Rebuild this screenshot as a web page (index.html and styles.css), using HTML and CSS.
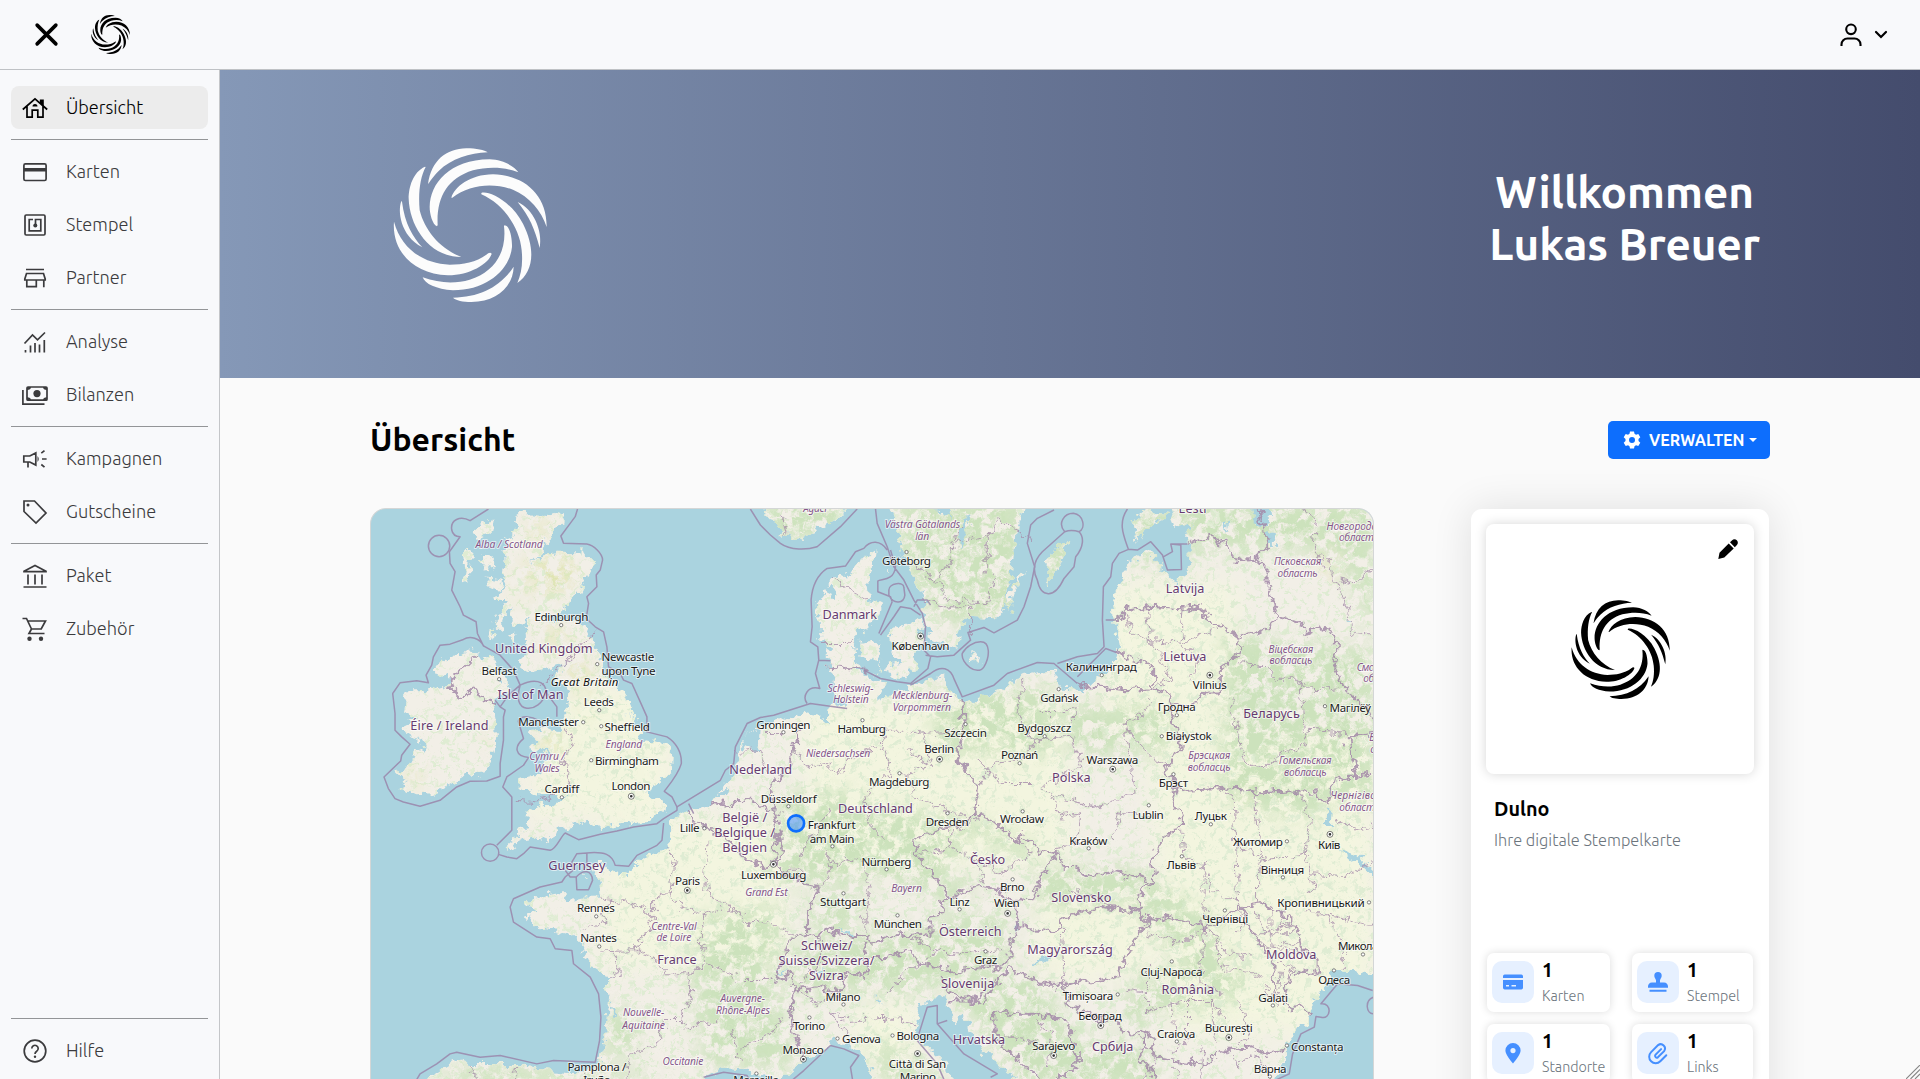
FILE: index.html
```html
<!DOCTYPE html>
<html lang="de">
<head>
<meta charset="utf-8">
<title>Dulno – Übersicht</title>
<link rel="stylesheet" href="styles.css">
</head>
<body>
<svg class="defs" aria-hidden="true">
  <symbol id="logo" viewBox="70 83 462 462">
    <path d="M175 192C185 120 230 85 290 84C320 84 345 90 354 96C300 98 245 115 207 152C188 171 180 185 175 192Z"/>
    <path d="M202 318C188 312 180 280 180 260C180 190 240 118 360 117C400 118 435 138 446 156C400 138 350 140 310 150C230 175 200 235 204 314Z"/>
    <path d="M245 232C255 200 300 163 370 162C460 164 532 220 531 320C515 270 480 230 430 208C370 186 300 192 248 232Z"/>
    <path d="M166 139C130 155 117 200 117 235C120 320 180 410 275 410C210 385 165 330 150 270C145 215 152 170 168 140Z"/>
    <path d="M95 242C84 270 90 345 158 381C130 350 105 310 97 244Z"/>
    <path d="M73 304C66 390 130 462 235 465C300 465 358 430 366 400C362 394 356 398 350 403C320 425 280 433 240 433C160 430 95 385 73 304Z"/>
    <path d="M335 218C350 210 420 235 460 310C500 390 490 455 443 488C455 460 460 430 456 390C450 320 400 250 335 222Z"/>
    <path d="M444 245C490 265 520 330 510 383C495 325 480 290 444 245Z"/>
    <path d="M404 315C422 315 428 360 427 380C420 450 350 510 250 510C200 507 165 490 159 471C210 490 260 490 300 478C375 455 412 395 403 318Z"/>
    <path d="M432 439C430 500 380 545 305 545C280 545 258 540 250 532C330 530 390 502 432 439Z"/>
  </symbol>
</svg>

<header class="topbar">
  <div class="topbar-left">
    <svg class="close" viewBox="0 0 24 24"><path d="M3 3L21 21M21 3L3 21"/></svg>
    <svg class="brand"><use href="#logo"/></svg>
  </div>
  <div class="user">
    <svg class="user-icon" viewBox="0 0 22 24"><circle cx="11" cy="6.3" r="4.8"/><path d="M1.500 23v-1.500a6 6 0 0 1 6-6h7a6 6 0 0 1 6 6V23"/></svg>
    <svg class="chevron" viewBox="0 0 14 10"><path d="M2 2l5 5 5-5"/></svg>
  </div>
</header>

<div class="shell">
  <nav class="sidebar">
    <a class="item active"><svg viewBox="0 0 26 26"><path d="M.8 14.500L13 3.800l12.200 10.700M5 11.500V22.200h5.200v-7h5.600v7H21V11.500"/><path class="solid" d="M17.800 4.500h4v7l-4-3.500zM10.500 11.500a2.500 2.500 0 0 1 5 0z"/></svg><span>Übersicht</span></a>
    <hr>
    <a class="item"><svg viewBox="0 0 26 26"><rect x="1.900" y="4.900" width="22.200" height="16.600" rx="1.500"/><path class="solid" d="M2 9h22v3.500H2z"/></svg><span>Karten</span></a>
    <a class="item"><svg viewBox="0 0 26 26"><rect x="3" y="3" width="20" height="20" rx="1.200"/><path d="M11 7.500H7.200v11.300h11.600V7.500H13.500v5"/><circle class="solid" cx="13.300" cy="13.500" r="2"/></svg><span>Stempel</span></a>
    <a class="item"><svg viewBox="0 0 26 26"><path d="M4 4.500h18M4.500 8.500h17l1.700 5.500v1H2.800v-1zM4.800 15v6.600h9.500V15M21.800 15v7.300"/></svg><span>Partner</span></a>
    <hr>
    <a class="item"><svg viewBox="0 0 26 26"><path d="M2.500 14.500l8-8.500 5 4.800L23 3.500M3.500 21v2.500M8.500 16.500v7M13 14v9.500M17.500 15.500v8M22.300 11v12.500"/></svg><span>Analyse</span></a>
    <a class="item"><svg viewBox="0 0 26 26"><rect x="5" y="5" width="20" height="13.200" rx="1"/><path d="M.9 8v14.200h21.600"/><circle class="solid" cx="15" cy="11.600" r="3.600"/><path class="solid" d="M5 5h4q0 3-4 3zM25 5h-4q0 3 4 3zM5 18.200h4q0-3-4-3zM25 18.200h-4q0-3 4-3z"/></svg><span>Bilanzen</span></a>
    <hr>
    <a class="item"><svg viewBox="0 0 26 26"><path d="M1.800 10h6l6-3v12l-6-3h-6zM6 16v5.500M19.300 7.200l3.200-2.500M20 13h4.600M19.300 18.500l3.200 2.600"/><path class="solid" d="M15.500 10q2.500 3 0 6z"/></svg><span>Kampagnen</span></a>
    <a class="item"><svg viewBox="0 0 26 26"><path d="M2 2h10.500l11.500 12-10 10L2 12.500z"/><circle class="solid" cx="6" cy="6" r="1.500"/></svg><span>Gutscheine</span></a>
    <hr>
    <a class="item"><svg viewBox="0 0 26 26"><path d="M2 8.200L13 2.500l11 5.700v.5H2zM6 11.500v10M13 11.500v10M20 11.500v10M1.500 24h23"/></svg><span>Paket</span></a>
    <a class="item"><svg viewBox="0 0 26 26"><path d="M.5 2.500h4l5 10.500h9.700l4.300-8H5.500M9.500 13l-2.500 4.500h15.500"/><circle class="solid" cx="7.500" cy="22.800" r="2.200"/><circle class="solid" cx="19" cy="22.800" r="2.200"/></svg><span>Zubehör</span></a>
    <div class="spacer"></div>
    <hr>
    <a class="item"><svg viewBox="0 0 26 26"><circle cx="13" cy="13" r="10.800"/><path d="M9.800 10.500a3.200 3.200 0 1 1 4.900 2.700c-1.200.8-1.700 1.400-1.700 2.800"/><circle class="solid" cx="13" cy="18.800" r="1.200"/></svg><span>Hilfe</span></a>
  </nav>

  <main class="main">
    <section class="hero">
      <svg class="hero-logo"><use href="#logo"/></svg>
      <h1>Willkommen<br>Lukas Breuer</h1>
    </section>

    <section class="heading">
      <h2>Übersicht</h2>
      <button class="manage" type="button">
        <svg viewBox="0 0 18 18"><path fill-rule="evenodd" d="M7 .5h4l.5 2.300 1.500.9 2.300-.8 2 3.400L15.500 8v2l1.800 1.700-2 3.400-2.300-.8-1.500.9-.5 2.300H7l-.5-2.300-1.500-.9-2.300.8-2-3.400L2.500 10V8L.7 6.300l2-3.400 2.300.8 1.500-.9zM9 6a3 3 0 1 0 0 6 3 3 0 0 0 0-6z"/></svg>
        <span>VERWALTEN</span><i class="caret"></i>
      </button>
    </section>

    <section class="content">
      <div class="map">
        <svg viewBox="3 27 3003 1713" preserveAspectRatio="xMinYMin slice">
          <defs>
            <path id="land" d="M450 40L520 48 583 33 583 65 545 95 530 120 515 155 485 185 530 160 570 155 640 158 668 178 664 205 645 240 630 270 612 300 590 325 560 340 520 350 545 365 600 350 645 380 662 410 680 450 695 490 700 530 740 550 770 590 790 640 795 650 760 636 800 655 790 680 815 700 810 720 850 725 890 735 910 760 908 800 890 830 860 855 830 875 850 893 888 903 886 930 850 950 800 965 720 975 700 985 640 965 610 975 560 985 545 1025 520 1020 490 1012 445 1020 435 1050 405 1040 430 1020 470 970 480 930 510 915 560 915 590 890 605 878 570 893 540 885 490 878 455 860 440 842 490 830 520 810 535 780 540 755 520 745 490 765 478 755 505 725 470 690 530 685 570 690 590 640 585 600 600 570 590 560 560 550 560 520 580 490 520 510 490 520 450 500 450 480 478 460 465 430 462 390 480 350 440 375 420 370 430 320 400 350 385 345 410 300 370 300 410 250 400 230 405 200 400 150 420 110 440 80 435 50Z
            M315 90L370 55 360 100 320 120 308 105ZM285 150L305 150 295 245 278 250 288 210ZM330 180L350 155 378 200 350 205ZM340 235L400 242 390 268 360 255ZM375 350L405 345 390 390 378 380ZM420 405L440 400 436 430ZM365 390L375 385 372 415 360 410Z
            M195 500L240 470 290 450 325 455 335 472 370 470 385 500 410 540 410 580 365 600 375 650 380 700 370 760 355 800 350 815 290 825 250 850 200 880 150 885 110 875 85 860 110 845 80 815 115 800 140 755 175 740 120 700 100 690 110 670 140 660 105 640 110 600 105 570 180 570 230 555 250 530 195 520Z
            M165 1740L230 1695 265 1675 300 1690 400 1690 440 1690 550 1710 640 1717 690 1690 700 1650 710 1500 715 1490 710 1440 725 1430 690 1420 665 1400 650 1370 640 1340 620 1310 560 1295 500 1280 470 1245 500 1240 470 1210 500 1185 580 1175 600 1200 640 1195 690 1195 685 1150 665 1085 700 1085 710 1115 780 1125 800 1105 800 1085 890 1045 900 1020 900 960 960 935 1025 905 1050 870 1090 820 1110 770 1115 700 1165 680 1250 655 1300 640 1350 650 1372 670 1375 620 1430 620 1400 590 1385 560 1390 520 1375 500 1375 450 1350 420 1345 310 1365 260 1390 235 1440 225 1470 180 1515 150 1510 200 1490 240 1495 300 1535 310 1530 340 1500 370 1480 390 1450 425 1455 470 1450 510 1500 530 1550 545 1520 600 1590 570 1640 555 1690 530 1725 530 1735 570 1780 610 1840 590 1910 560 1960 520 2030 510 2050 515 2065 565 2130 570 2165 540 2210 510 2245 460 2230 360 2225 310 2250 250 2265 190 2330 150 2375 200 2410 250 2450 220 2455 130 2440 110 2465 70 2410 80 2395 10 3030 10 3030 1425 2910 1405 2880 1415 2875 1440 2840 1480 2810 1530 2815 1570 2780 1575 2755 1610 2745 1640 2745 1680 2700 1760 1980 1760 1890 1700 1810 1620 1790 1560 1770 1540 1755 1570 1735 1540 1730 1490 1690 1490 1630 1520 1645 1560 1635 1600 1680 1650 1730 1690 1750 1760 1510 1760 1495 1690 1470 1655 1420 1630 1390 1620 1360 1650 1300 1680 1250 1720 1230 1740 1180 1725 1090 1705 1050 1700 1000 1730 985 1760 165 1760Z
            M1555 10L1580 80 1600 170 1630 240 1670 310 1650 330 1665 370 1680 420 1760 440 1770 380 1800 350 1880 355 1910 300 1920 220 1935 130 1950 50 1965 10ZM1170 10L1200 60 1240 100 1300 120 1340 90 1410 50 1435 10Z
            M1555 400L1600 375 1640 355 1660 370 1650 400 1655 430 1630 460 1640 490 1610 535 1560 525 1545 500 1590 490 1560 450ZM1470 425L1510 415 1530 440 1520 480 1490 480 1470 460ZM1960 205L1915 335 1908 325 1915 290 1940 230ZM1800 455L1825 470 1820 490 1797 478ZM2035 160L2100 120 2075 180 2045 230 2032 255 2030 200ZM2290 60L2330 30 2390 35 2370 65 2320 85 2300 125 2285 90ZM1435 480L1475 500 1460 508ZM1535 475L1520 520 1530 515ZM638 1130L652 1132 645 1138ZM1545 208L1558 206 1550 216Z"/>
            <clipPath id="landClip"><use href="#land"/></clipPath>
            <filter id="rough" filterUnits="userSpaceOnUse" x="-20" y="0" width="3060" height="1760" color-interpolation-filters="sRGB">
              <feTurbulence type="fractalNoise" baseFrequency=".04" numOctaves="3" seed="4"/>
              <feDisplacementMap in="SourceGraphic" scale="42" xChannelSelector="R" yChannelSelector="G"/>
            </filter>
            <filter id="soft" filterUnits="userSpaceOnUse" x="-20" y="0" width="3060" height="1760" color-interpolation-filters="sRGB">
              <feGaussianBlur stdDeviation="40"/>
            </filter>
            <filter id="woods" filterUnits="userSpaceOnUse" x="-20" y="0" width="3060" height="1760" color-interpolation-filters="sRGB">
              <feGaussianBlur in="SourceGraphic" stdDeviation="28" result="b"/>
              <feTurbulence type="fractalNoise" baseFrequency=".03" numOctaves="6" seed="9"/>
              <feColorMatrix values="0 0 0 0 0  0 0 0 0 0  0 0 0 0 0  5 0 0 0 -1.900" result="n"/>
              <feComposite in="b" in2="n" operator="in"/>
            </filter>
            <filter id="speck" filterUnits="userSpaceOnUse" x="-20" y="0" width="3060" height="1760" color-interpolation-filters="sRGB">
              <feTurbulence type="fractalNoise" baseFrequency=".05" numOctaves="5" seed="21"/>
              <feColorMatrix values="0 0 0 0 0  0 0 0 0 0  0 0 0 0 0  0 7 0 0 -3.800" result="n"/>
              <feComposite in="SourceGraphic" in2="n" operator="in"/>
            </filter>
          </defs>

          <g filter="url(#rough)">
            <use href="#land" class="land"/>
            <g clip-path="url(#landClip)">
              <path class="plain" d="M700 960H1250V1400H700ZM1300 600H2100V1100H1300ZM2200 250H2600V700H2200ZM2330 700H3010V1600H2400ZM2000 1170H2350V1430H2000ZM1450 1500H1640V1700H1450ZM600 560H900V950H450Z" filter="url(#soft)"/>
              <path class="speck" d="M0 0H3020V1760H0Z" filter="url(#speck)"/>
              <g class="wood" filter="url(#woods)">
                <path d="M1560 0H1960V370H1700L1600 200ZM1170 0H1430V120H1200Z"/>
                <path d="M2240 150H2900L3010 450V0H2400L2450 230ZM2560 400L3010 450V900H2550Z"/>
                <path d="M1680 560H2050V760H1700ZM2060 620H2400V760H2100Z"/>
                <path d="M1230 880H1480V1150H1200ZM1450 900L1900 980 1780 1020 1700 1180 1480 1120Z"/>
                <path d="M1350 1180L1500 1200 1400 1320 1300 1260ZM1680 1130L1830 1150 1720 1250Z"/>
                <path d="M1000 1240L1250 1220 1200 1400 1280 1700 1000 1700 960 1400Z"/>
                <path d="M1240 1350L1900 1230 1920 1400 1600 1480 1260 1480ZM1720 1450L2000 1420 2200 1760H1960Z"/>
                <path d="M1990 1100L2320 1100 2350 1200 2000 1230ZM2320 1120L2520 1250 2580 1420 2500 1440 2300 1240Z"/>
                <path d="M2300 1420L2620 1380 2600 1500 2320 1540ZM2240 1470L2340 1500 2310 1610 2250 1570ZM2100 1600L2330 1640 2400 1760H2050Z"/>
                <path d="M715 1500L810 1560 800 1650 700 1680ZM300 1690L850 1720V1760H165ZM2600 820L2880 830 2850 960 2640 930ZM2000 100H2110V260H2000ZM2280 20H2400V130H2280Z"/>
                <path d="M1500 1600L1640 1680 1740 1760H1550ZM1850 980L2000 1030 1980 1080 1850 1040Z"/>
              </g>
              <g class="moor" filter="url(#woods)">
                <path d="M480 70H530V110H480ZM500 190L570 170 620 230 540 280 500 250ZM440 200L490 190 470 240ZM520 390L600 400 590 440 510 420ZM600 480L660 500 650 570 610 560ZM650 600L670 660 640 650ZM520 700L570 690 570 760 520 750ZM340 690L370 700 360 740ZM400 280L490 280 470 300ZM2860 160L2890 180 2880 240 2850 230ZM2620 860L2650 860 2640 890ZM100 820L150 810 140 870Z"/>
              </g>
            </g>
            <path class="lake" d="M1765 100L1800 30 1790 100 1768 145ZM1690 30L1740 50 1750 20ZM2560 65L2575 60 2570 100ZM2645 10L2690 20 2695 60 2680 80 2655 70ZM2685 95L2712 100 2712 135 2690 135ZM2868 925L2882 925 2880 980 2868 980ZM2900 1045L2950 1060 3010 1110 3010 1125 2940 1080ZM1990 1385L2035 1365 2040 1375 1995 1392ZM1220 1415L1260 1408 1225 1425ZM1405 1285L1455 1305 1440 1308ZM1515 1480L1530 1510 1520 1505ZM1110 700L1165 685 1160 760 1120 740ZM1030 890L1080 860 1070 890ZM715 1500L740 1530 735 1555ZM1360 258L1390 255 1400 290 1375 290ZM2930 370L2925 350 2935 365ZM1930 1290L1940 1265 1945 1290ZM1330 1410L1360 1400 1350 1420ZM380 540L400 542 395 560Z"/>
            <g class="region">
              <path d="M560 885L500 905 440 900M590 690L610 730 580 770 590 840 620 880M685 385L640 430 620 460 580 490 510 560M725 1195L700 1240 710 1260 650 1290M690 1195L760 1205 820 1220 850 1250 830 1290 795 1350 690 1355M850 1250L850 1190 900 1170 910 1060 885 1045M900 1170L930 1220 1000 1245 1050 1230M1000 1245L990 1330 1010 1390M730 1360L750 1420 720 1430M795 1350L850 1370 880 1420 950 1420 1000 1390M950 1420L970 1470 930 1560 880 1560 860 1630 780 1660 770 1740M930 1560L960 1590 1000 1560 1040 1570M1010 1030L1000 1170M1010 1390L1090 1420 1100 1440 1200 1440M1130 1270L1180 1260 1280 1310M1010 1150L1020 1190 1110 1240 1130 1270"/>
              <path d="M1380 920L1280 1080M1290 700L1270 760 1320 800 1360 790 1400 820 1460 760 1530 740 1540 690M1540 740L1560 820 1480 890 1500 980 1540 1020M1340 1040L1370 1060 1380 1110 1350 1170M1420 1070L1480 1090 1500 1160 1480 1240 1480 1300M1370 1060L1400 1100 1440 1075M1650 700L1680 770 1660 800 1600 820 1640 900 1800 950M1540 690L1620 690 1660 700 1760 690M1300 1140L1290 1110 1230 1110M1350 1300L1360 1370 1270 1470M1350 430L1430 430 1450 420M1385 235L1490 300M1250 100L1240 40M1090 760L1170 750 1190 810 1240 830M1190 700L1240 700M1600 1300L1700 1350 1780 1360 1900 1350M1700 1350L1600 1420 1550 1480M1690 800L1620 750"/>
              <path d="M1640 200L1700 240 1740 180 1750 130 1860 100 1880 60 1990 120M1700 240L1730 300 1850 310 1870 230M1660 300L1720 320 1800 320 1800 400M1850 100L1850 220M1780 80L1740 130M1990 850L1900 850 1820 780M1960 540L1940 620 1960 680 1990 720 2110 710 2130 800 2010 860 2060 890 2180 920 2290 880 2280 800 2260 670 2320 640 2340 600M1990 720L1960 780 1870 790 1850 830 1820 860M2100 690L2110 620 2060 640 2010 640M2260 680L2330 760 2400 800M2050 890L2070 950 2130 940 2120 1030 2050 1050M2230 1010L2250 930 2340 950M1650 1060L1740 1040 1740 1000 1840 940M1740 1040L1900 1120 1980 1060 1930 1000M1840 1150L1810 1060M1780 990L1750 960 1780 940"/>
              <path d="M2270 340L2280 400 2330 420 2440 430 2500 400 2560 380M2330 330L2340 420 2360 440 2400 540 2340 560M2440 330L2430 430 2480 480 2460 540M2600 490L2680 500 2720 540 2790 540 2810 570 2900 560M2580 600L2600 680 2620 780 2680 800 2740 750 2780 760 2820 690 2930 700M2790 540L2800 700M2860 200L2830 130 2840 60 2790 20M2870 170L2890 240 2940 250 3010 210M2900 250L2930 330 2940 400 3010 405M2520 860L2590 890 2600 1200 2520 1170 2500 1100 2440 1070 2430 960M2660 860L2650 920 2670 1080 2800 1060 2830 1160 2810 1180M2590 1040L2680 1070 2660 1150 2660 1210M2800 1060L2820 960 2790 880M2820 1120L2920 1130 3010 1080M2800 1240L2870 1240 2920 1350 2920 1400M2870 1240L3010 1280M2900 960L2960 990 3010 980M2500 1250L2500 1120M2600 1210L2610 1270"/>
              <path d="M2330 1300L2440 1330 2500 1280 2530 1300 2570 1360 2640 1370M2500 1290L2490 1450 2560 1480M2530 1310L2550 1400 2680 1430M2620 1270L2590 1300M2330 1400L2330 1530 2440 1500 2530 1500 2560 1560M2400 1500L2410 1600M2450 1500L2450 1620 2400 1650M2520 1500L2540 1620M2600 1500L2640 1600 2590 1640M2680 1460L2720 1520M2070 1260L2080 1420 2060 1480M2080 1170L2150 1180 2230 1220M2270 1470L2340 1480M2650 1230L2680 1300 2760 1270M2660 1300L2760 1300 2780 1280M2700 1220L2700 1340M2720 1330L2780 1330M2720 1380L2770 1400 2740 1450M2740 1230L2720 1300M2650 1320L2700 1340 2810 1350M2730 1400L2720 1500M2760 1400L2740 1480M1900 1600L1960 1620 2030 1640M2500 1640L2480 1760M2560 1640L2600 1700 2640 1660M2300 1600L2360 1680 2300 1760M2400 1700L2450 1750M2650 1660L2700 1740M1430 1550L1380 1540 1430 1600M1430 1560L1540 1550 1640 1570M1280 1470L1340 1510 1400 1480M640 1717L660 1760M440 1700L430 1760M300 1690L330 1760M1110 1640L1200 1600 1230 1550M1080 1580L1110 1690M2000 1560L2040 1600 2030 1700"/>
            </g>
            <g class="border">
              <path d="M325 460L285 500 250 530 240 560 265 585 290 590 310 560 340 600 380 610"/>
              <path d="M955 930L970 970 1010 975 1030 1000 1080 1020 1130 1080 1180 1100 1210 1090M1020 905L1080 915 1110 895 1160 905 1190 930 1230 940M1290 700L1260 770 1260 800 1200 860 1210 930 1225 1010 1210 1050 1220 1100 1270 1130 1290 1150 1350 1160 1310 1240 1310 1310M1225 1010L1240 1060 1220 1100"/>
              <path d="M1310 1310L1260 1320 1210 1440 1260 1420 1270 1470 1260 1560 1290 1660 1295 1680M1310 1310L1380 1290 1440 1310 1490 1310 1500 1330 1550 1310 1660 1300 1680 1310 1680 1250 1720 1240 1710 1200 1740 1190 1650 1080 1630 1020"/>
              <path d="M1490 1330L1480 1360 1490 1430 1430 1420 1400 1480 1350 1460 1270 1470M1490 1370L1550 1370 1620 1350 1650 1390 1740 1410 1870 1400 1920 1380 1920 1340 1940 1280 1930 1200 1880 1170 1820 1160 1740 1190"/>
              <path d="M1630 1020L1700 990 1780 970 1810 940 1820 860 1760 770 1780 690 1775 590M1810 940L1880 970 1940 1030 1950 1000 2010 1050 2060 1060 2080 1100 2120 1100 2150 1130 2230 1110 2300 1130 2350 1150M1930 1200L1990 1190 2010 1130 2060 1060M1940 1280L2060 1290 2080 1250 2190 1220 2300 1230 2340 1270 2380 1250 2480 1270 2500 1290 2610 1220M1710 1430L1740 1480 1840 1510 1860 1470 1920 1400 2010 1450 2100 1450 2170 1440 2240 1430 2260 1380 2300 1310 2350 1250M1740 1500L1820 1500 1840 1470M2110 1450L2080 1460 2100 1520 2240 1570 2260 1600 2320 1590 2350 1620 2340 1650 2360 1670 2500 1690 2560 1650 2640 1640 2700 1660 2740 1650M1870 1540L2000 1540 2090 1560M1870 1540L1880 1620 1990 1720 2020 1740M2090 1570L2110 1640 2130 1680 2060 1740M2090 1560L2010 1550M2320 1600L2310 1680 2370 1740M2300 1230L2310 1160 2350 1150"/>
              <path d="M2610 1220L2650 1300 2710 1390 2715 1500 2760 1520 2790 1515 2815 1540M2610 1220L2680 1210 2750 1250 2780 1290 2790 1340 2840 1380 2840 1420 2780 1410 2750 1450 2740 1500"/>
              <path d="M2350 1150L2340 1080 2380 1010 2430 980 2430 950 2400 880 2420 870 2600 860 2660 880 2810 870 2870 910 2890 840 2930 830 3000 820M2380 810L2430 750 2390 580 2350 560 2350 500 2240 455M2120 550L2260 570 2340 565M2390 580L2390 610 2480 610 2500 580 2550 580 2550 500 2610 460 2600 410 2570 390 2500 350 2490 320 2460 330 2340 320 2270 330 2235 360M2380 810L2420 850 2410 880M2600 410L2680 390 2720 350 2690 260 2690 200 2660 175 2600 180 2560 130 2510 110 2455 130M2660 175L2690 140 2665 20M2720 350L2790 370 2810 400 2850 380 2900 410 2890 500 2930 580 2980 620 3010 660M2930 830L2960 830 2930 710 3010 700M1375 500L1450 505 1490 515"/>
            </g>
          </g>
          <g class="sea">
            <path d="M355 27L300 62C270 45 240 60 245 90C248 105 258 110 270 110L238 155 240 190 255 215 245 270 270 320 280 345 318 365 322 400 340 437C330 415 300 405 280 418L240 432 210 435 190 470 185 495 168 525 175 548 140 542 90 548 68 580 75 640 75 690 95 710 120 732 95 765 92 782 42 830 55 865 75 895 100 905 150 918 210 900 260 860 300 843 350 842 390 828 390 790 400 720 400 650 405 630 390 620 375 600"/>
            <circle cx="207" cy="138" r="32"/>
            <path d="M622 27L615 50 600 70 572 108 580 130 650 132C670 135 697 160 697 180L690 210 678 225 680 260 650 290 655 310 648 355 675 380 700 395 710 440 715 500 750 520 760 540 785 550 810 605 830 650 830 695 890 710C915 725 935 755 933 790C925 820 900 850 882 873L905 890 920 920 1050 840 1065 810 1090 790 1095 740 1130 670 1170 652 1210 645 1320 610 1390 620 1430 625"/>
            <path d="M340 437L390 465 430 510 450 555 415 585 390 620M450 555C490 535 525 540 528 575C520 610 490 627 470 624C445 620 438 595 450 555ZM530 580L560 620 560 650M520 680C500 640 440 645 445 665L460 715C430 740 435 768 475 772L460 795 410 830 398 860 425 890 425 990 380 1035M385 1062L410 1070 440 1075 460 1060 480 1040 540 1050C560 1045 570 1010 585 998L625 1018 690 1002 740 992 790 980 860 970 880 955 920 930 920 920M880 968L875 1020 860 1035 800 1065 775 1098 735 1095C725 1060 700 1055 660 1057L620 1060 605 1085 608 1110 585 1130 575 1145 510 1160 430 1195 420 1220 430 1265 500 1310 540 1315 555 1345 605 1350 610 1390 660 1430 685 1480 692 1550 688 1620 675 1685 550 1680 500 1690 390 1665 330 1670 260 1655 240 1660 200 1690 150 1720 140 1737M585 1110L600 1130 620 1130M618 1130C640 1105 665 1110 667 1140L655 1168H620ZM650 1060V1090L640 1110M955 910L970 940"/>
            <circle cx="360" cy="1057" r="26"/>
            <path d="M1140 27L1170 75 1200 105 1230 130C1260 152 1310 150 1340 140L1410 80 1460 27M1515 27L1520 70 1550 140 1570 200 1600 240 1630 300 1655 340 1665 380 1660 450 1680 470 1672 505 1620 550 1580 545 1530 535 1480 510M1550 150C1530 120 1500 120 1480 145L1455 155 1425 198 1370 205C1340 225 1325 260 1322 300L1325 380 1320 425 1342 440 1345 480 1335 520 1348 565C1310 555 1295 590 1310 610M1345 480L1380 482M1560 150L1575 200C1570 245 1530 235 1522 243L1522 275 1560 290 1565 305M1555 270C1555 250 1600 242 1600 262L1603 285C1600 310 1570 315 1555 285ZM1565 305L1525 400M1530 405L1570 350 1590 320 1620 325 1650 345M1630 320L1640 300 1670 300 1680 315M1665 465L1700 470 1750 465 1800 420 1792 397 1840 382 1870 398 1940 360 1960 320 1980 260 1992 200 1970 130 1980 75 2000 55 2050 30M1620 555L1680 520C1710 495 1740 500 1752 540L1775 590 1870 555 1910 520 2000 487 2050 490 2120 550M1830 425C1860 425 1858 470 1840 500C1820 530 1770 490 1775 460C1785 440 1810 425 1830 425Z"/>
            <path d="M2082 95C2060 70 2080 40 2108 40C2140 45 2145 85 2125 95C2140 110 2140 140 2115 170L2110 200 2080 235C2050 300 2010 290 2000 240C1980 200 2000 170 2015 155ZM2082 95C2095 90 2110 90 2125 95M2270 27C2240 70 2260 110 2273 148L2245 160 2225 190 2220 230 2198 260 2195 360 2200 440 2180 460 2120 470 2060 490M2120 530L2205 445 2245 460M2205 360L2235 360M2273 148L2300 150 2340 125 2375 165 2390 210 2432 208 2430 135 2400 132 2405 155 2375 172M2400 132H2450"/>
            <path d="M1240 1760L1300 1710 1380 1635 1420 1645 1465 1665 1440 1700 1450 1760M1640 1620L1700 1690 1730 1760M1645 1600L1670 1520 1700 1515 1700 1570 1780 1660 1880 1720 1860 1730M1700 1570L1730 1560M1000 1730L1060 1715 1130 1725 1150 1760M3005 1470L2960 1455 2900 1450 2850 1510C2885 1505 2880 1560 2850 1550L2835 1548 2830 1580 2790 1600 2765 1660 2755 1720 2700 1745M3008 1490C2980 1500 2985 1540 3008 1540"/>
          </g>

          <g class="dots">
            <circle cx="573" cy="375" r="5"/><circle cx="681" cy="492" r="5"/><circle cx="387" cy="537" r="5"/><circle cx="687" cy="630" r="5"/><circle cx="639" cy="666" r="5"/><circle cx="693" cy="678" r="5"/><circle cx="663" cy="780" r="5"/><circle cx="575" cy="891" r="5"/><circle cx="1002" cy="984" r="5"/><circle cx="678" cy="1248" r="5"/><circle cx="687" cy="1338" r="5"/><circle cx="1608" cy="156" r="5"/><circle cx="1476" cy="660" r="5"/><circle cx="1239" cy="696" r="5"/><circle cx="1785" cy="672" r="5"/><circle cx="1587" cy="819" r="5"/><circle cx="1947" cy="789" r="5"/><circle cx="2022" cy="708" r="5"/><circle cx="2064" cy="567" r="5"/><circle cx="2193" cy="525" r="5"/><circle cx="2418" cy="645" r="5"/><circle cx="2373" cy="708" r="5"/><circle cx="2408" cy="822" r="5"/><circle cx="2862" cy="618" r="5"/><circle cx="1254" cy="918" r="5"/><circle cx="1731" cy="939" r="5"/><circle cx="1956" cy="933" r="5"/><circle cx="1386" cy="1038" r="5"/><circle cx="1548" cy="1107" r="5"/><circle cx="1419" cy="1179" r="5"/><circle cx="1581" cy="1245" r="5"/><circle cx="1767" cy="1227" r="5"/><circle cx="1926" cy="1137" r="5"/><circle cx="1845" cy="1353" r="5"/><circle cx="1419" cy="1512" r="5"/><circle cx="1317" cy="1551" r="5"/><circle cx="1401" cy="1614" r="5"/><circle cx="1566" cy="1605" r="5"/><circle cx="1158" cy="1719" r="5"/><circle cx="2334" cy="915" r="5"/><circle cx="2520" cy="972" r="5"/><circle cx="2154" cy="1044" r="5"/><circle cx="2748" cy="1023" r="5"/><circle cx="2433" cy="1068" r="5"/><circle cx="2736" cy="1131" r="5"/><circle cx="2994" cy="1206" r="5"/><circle cx="2562" cy="1230" r="5"/><circle cx="2403" cy="1383" r="5"/><circle cx="2976" cy="1362" r="5"/><circle cx="2889" cy="1410" r="5"/><circle cx="2241" cy="1482" r="5"/><circle cx="2706" cy="1515" r="5"/><circle cx="2418" cy="1623" r="5"/><circle cx="2748" cy="1635" r="5"/><circle cx="2697" cy="1728" r="5"/>
          </g>
          <g class="capitals">
            <circle cx="783" cy="888" r="6"/><circle cx="951" cy="1170" r="6"/><circle cx="1650" cy="408" r="6"/><circle cx="1707" cy="777" r="6"/><circle cx="1209" cy="1092" r="6"/><circle cx="1911" cy="1239" r="6"/><circle cx="2226" cy="807" r="6"/><circle cx="2517" cy="525" r="6"/><circle cx="2877" cy="1002" r="6"/><circle cx="2190" cy="1575" r="6"/><circle cx="2574" cy="1611" r="6"/><circle cx="2049" cy="1665" r="6"/><circle cx="1299" cy="1676" r="6"/><circle cx="1641" cy="1659" r="6"/>
          </g>
          <g class="city">
            <text x="574" y="363" textLength="162">Edinburgh</text><text x="773" y="483" textLength="158">Newcastle</text><text x="775" y="525" textLength="162">upon Tyne</text><text x="387" y="525" textLength="106">Belfast</text><text x="686" y="618" textLength="90">Leeds</text><text x="535" y="678" textLength="182">Manchester</text><text x="771" y="691" textLength="136">Sheffield</text><text x="770" y="793" textLength="192">Birmingham</text><text x="575" y="879" textLength="104">Cardiff</text><text x="782" y="870" textLength="117">London</text><text x="958" y="995" textLength="60">Lille</text><text x="952" y="1153" textLength="75">Paris</text><text x="677" y="1236" textLength="113">Rennes</text><text x="685" y="1326" textLength="110">Nantes</text><text x="680" y="1711" textLength="176">Pamplona /</text><text x="680" y="1749" textLength="82">Iruña</text>
            <text x="1608" y="194" textLength="147">Göteborg</text><text x="1650" y="450" textLength="174">København</text><text x="1239" y="685" textLength="163">Groningen</text><text x="1474" y="697" textLength="145">Hamburg</text><text x="1785" y="711" textLength="128">Szczecin</text><text x="1706" y="759" textLength="90">Berlin</text><text x="1947" y="776" textLength="112">Poznań</text><text x="2021" y="696" textLength="162">Bydgoszcz</text><text x="1586" y="858" textLength="181">Magdeburg</text>
            <text x="1255" y="907" textLength="168">Düsseldorf</text><text x="1384" y="987" textLength="144">Frankfurt</text><text x="1385" y="1028" textLength="134">am Main</text><text x="1730" y="976" textLength="129">Dresden</text><text x="1954" y="967" textLength="131">Wrocław</text><text x="1548" y="1097" textLength="150">Nürnberg</text><text x="1210" y="1136" textLength="196">Luxembourg</text><text x="1418" y="1217" textLength="138">Stuttgart</text><text x="1925" y="1172" textLength="74">Brno</text><text x="1767" y="1216" textLength="61">Linz</text><text x="1909" y="1220" textLength="77">Wien</text><text x="1582" y="1283" textLength="144">München</text><text x="1845" y="1391" textLength="70">Graz</text><text x="1418" y="1501" textLength="105">Milano</text><text x="1316" y="1587" textLength="97">Torino</text><text x="1473" y="1627" textLength="116">Genova</text><text x="1642" y="1619" textLength="128">Bologna</text><text x="1298" y="1660" textLength="124">Monaco</text><text x="1641" y="1702" textLength="172">Città di San</text><text x="1642" y="1742" textLength="109">Marino</text><text x="1157" y="1751" textLength="136">Marseille</text>
            <text x="2192" y="513" textLength="213">Калининград</text><text x="2066" y="604" textLength="115">Gdańsk</text><text x="2517" y="567" textLength="102">Vilnius</text><text x="2418" y="632" textLength="114">Гродна</text><text x="2454" y="720" textLength="138">Białystok</text><text x="2225" y="790" textLength="155">Warszawa</text><text x="2408" y="861" textLength="88">Брэст</text><text x="2938" y="634" textLength="124">Магілёў</text><text x="2332" y="955" textLength="94">Lublin</text><text x="2520" y="960" textLength="96">Луцьк</text><text x="2153" y="1033" textLength="114">Kraków</text><text x="2661" y="1037" textLength="149">Житомир</text><text x="2875" y="1045" textLength="67">Київ</text><text x="2432" y="1106" textLength="88">Львів</text><text x="2735" y="1121" textLength="130">Вінниця</text><text x="2850" y="1220" textLength="262">Кропивницький</text><text x="2563" y="1268" textLength="138">Чернівці</text><text x="2974" y="1350" textLength="146">Миколаїв</text><text x="2402" y="1428" textLength="186">Cluj-Napoca</text><text x="2890" y="1450" textLength="96">Одеса</text><text x="2152" y="1498" textLength="151">Timișoara</text><text x="2707" y="1504" textLength="89">Galați</text><text x="2188" y="1558" textLength="130">Београд</text><text x="2416" y="1611" textLength="115">Craiova</text><text x="2574" y="1594" textLength="144">București</text><text x="2049" y="1649" textLength="129">Sarajevo</text><text x="2839" y="1651" textLength="157">Constanța</text><text x="2698" y="1716" textLength="98">Варна</text>
          </g>
          <text class="island" x="643" y="557" textLength="203">Great Britain</text>
          <g class="state">
            <text x="417" y="143" textLength="202">Alba / Scotland</text><text x="761" y="744" textLength="110">England</text><text x="531" y="778" textLength="107">Cymru /</text><text x="531" y="814" textLength="76">Wales</text><text x="911" y="1288" textLength="136">Centre-Val</text><text x="911" y="1323" textLength="104">de Loire</text><text x="820" y="1548" textLength="124">Nouvelle-</text><text x="820" y="1584" textLength="128">Aquitaine</text><text x="938" y="1692" textLength="122">Occitanie</text><text x="1336" y="36" textLength="75">Agder</text><text x="1656" y="83" textLength="226">Västra Götalands</text><text x="1655" y="119" textLength="42">län</text><text x="1440" y="574" textLength="138">Schleswig-</text><text x="1441" y="609" textLength="107">Holstein</text><text x="1655" y="596" textLength="180">Mecklenburg-</text><text x="1654" y="632" textLength="174">Vorpommern</text><text x="1403" y="769" textLength="193">Niedersachsen</text><text x="1188" y="1187" textLength="127">Grand Est</text><text x="1608" y="1174" textLength="92">Bayern</text><text x="1117" y="1504" textLength="133">Auvergne-</text><text x="1118" y="1540" textLength="162">Rhône-Alpes</text><text x="2780" y="195" textLength="142">Псковская</text><text x="2780" y="231" textLength="120">область</text><text x="2965" y="89" textLength="196">Новгородская</text><text x="2964" y="124" textLength="120">область</text><text x="2760" y="458" textLength="134">Віцебская</text><text x="2760" y="493" textLength="128">вобласць</text><text x="3032" y="512" textLength="150">Смоленская</text><text x="3036" y="547" textLength="118">область</text><text x="2515" y="776" textLength="126">Брэсцкая</text><text x="2515" y="812" textLength="128">вобласць</text><text x="2803" y="792" textLength="158">Гомельская</text><text x="2803" y="827" textLength="128">вобласць</text><text x="3052" y="721" textLength="115">Брянская</text><text x="3056" y="757" textLength="116">область</text><text x="2970" y="896" textLength="182">Чернігівська</text><text x="2966" y="932" textLength="122">область</text>
          </g>
          <g class="country">
            <text x="521" y="460" textLength="292">United Kingdom</text><text x="481" y="597" textLength="198">Isle of Man</text><text x="238" y="690" textLength="234">Éire / Ireland</text><text x="620" y="1110" textLength="171">Guernsey</text><text x="920" y="1392" textLength="118">France</text><text x="1438" y="358" textLength="163">Danmark</text><text x="1171" y="821" textLength="188">Nederland</text><text x="1123" y="965" textLength="135">België /</text><text x="1123" y="1010" textLength="182">Belgique /</text><text x="1123" y="1054" textLength="134">Belgien</text><text x="1515" y="939" textLength="224">Deutschland</text><text x="1851" y="1090" textLength="106">Česko</text><text x="1799" y="1308" textLength="188">Österreich</text><text x="1369" y="1349" textLength="154">Schweiz/</text><text x="1368" y="1394" textLength="288">Suisse/Svizzera/</text><text x="1368" y="1438" textLength="105">Svizra</text><text x="1791" y="1463" textLength="160">Slovenija</text><text x="1825" y="1631" textLength="157">Hrvatska</text><text x="2465" y="38" textLength="84">Eesti</text><text x="2443" y="279" textLength="116">Latvija</text><text x="2442" y="483" textLength="129">Lietuva</text><text x="2702" y="654" textLength="170">Беларусь</text><text x="2102" y="846" textLength="116">Polska</text><text x="2132" y="1205" textLength="180">Slovensko</text><text x="2098" y="1360" textLength="256">Magyarország</text><text x="2761" y="1377" textLength="151">Moldova</text><text x="2451" y="1481" textLength="157">România</text><text x="2226" y="1651" textLength="124">Србија</text>
          </g>
          <circle class="marker" cx="1277" cy="969" r="24"/>
        </svg>
      </div>

      <aside class="card">
        <div class="card-image">
          <svg class="card-logo"><use href="#logo"/></svg>
          <svg class="pencil" viewBox="0 0 20 20"><path d="M.3 20l1.200-6.200L10.700 4.500l5 5L6.300 18.600zM12 3.300l1.900-1.900c1.800-1.800 3.800-1.200 4.900-.1s1.700 3.100-.1 4.900l-1.900 2z"/></svg>
        </div>
        <div class="card-text">
          <h3>Dulno</h3>
          <p>Ihre digitale Stempelkarte</p>
        </div>
        <div class="stats">
          <div class="stat"><div class="badge"><svg viewBox="0 0 20 20"><path d="M0 6V4.200Q0 2.500 1.700 2.500h16.600Q20 2.500 20 4.200V6zM0 8h20v7.800q0 1.700-1.700 1.700H1.700Q0 17.500 0 15.800zM3 13v1.500h3V13zM8.500 13v1.500H13V13z" fill-rule="evenodd"/></svg></div><div class="num"><b>1</b><span>Karten</span></div></div>
          <div class="stat"><div class="badge"><svg viewBox="0 0 20 20"><path d="M8 10.500V8.200C7.500 6.500 6.300 5.500 6.300 3.700a3.700 3.700 0 0 1 7.400 0c0 1.800-1.200 2.800-1.700 4.500v2.300h4c2.500 0 4 1.800 4 4v1.200H0v-1.200c0-2.200 1.500-4 4-4zM1.500 17.800h17v2h-17z"/></svg></div><div class="num"><b>1</b><span>Stempel</span></div></div>
          <div class="stat"><div class="badge"><svg viewBox="0 0 20 20"><path fill-rule="evenodd" d="M10 0a7.600 7.600 0 0 1 7.600 7.600C17.600 11.300 13 17 10 20.500 7 17 2.400 11.300 2.400 7.600A7.600 7.600 0 0 1 10 0zm0 5a2.600 2.600 0 1 0 0 5.200A2.600 2.600 0 0 0 10 5z"/></svg></div><div class="num"><b>1</b><span>Standorte</span></div></div>
          <div class="stat"><div class="badge"><svg class="clip" viewBox="0 0 24 24"><path d="M15.500 8.500l-5.700 5.700a1.800 1.800 0 0 0 2.500 2.500l6.200-6.200a4.300 4.300 0 0 0-6-6l-7 7a6.500 6.500 0 0 0 9.200 9.200l6-6" transform="translate(-.4 -.4)"/></svg></div><div class="num"><b>1</b><span>Links</span></div></div>
        </div>
      </aside>
    </section>
    <svg class="grip" viewBox="0 0 14 14"><path d="M0 14L14 0M4.500 14L14 4.500M9 14l5-5"/></svg>
  </main>
</div>
</body>
</html>
```
FILE: styles.css
```css
* { box-sizing: border-box; }
body {
  margin: 0;
  height: 1079px;
  overflow: hidden;
  display: flex;
  flex-direction: column;
  background: #fafafa;
  color: #000;
  font-family: Ubuntu, "Noto Sans", "Open Sans", sans-serif;
}
.defs { position: absolute; width: 0; height: 0; }
h1, h2, h3, p { margin: 0; }
svg { display: block; flex: none; }

/* Top bar */
.topbar {
  flex: none;
  height: 70px;
  display: flex;
  align-items: center;
  justify-content: space-between;
  padding: 0 32px 0 34px;
  background: #f8f9fb;
  border-bottom: 1px solid #bfc2c5;
}
.topbar-left { display: flex; align-items: center; gap: 32px; }
.close { width: 25px; height: 25px; fill: none; stroke: #000; stroke-width: 3.4; stroke-linecap: round; }
.brand { width: 39px; height: 39px; }
.user { display: flex; align-items: center; gap: 12px; }
.user-icon { width: 22px; height: 24px; fill: none; stroke: #000; stroke-width: 2.1; }
.chevron { width: 14px; height: 10px; margin-top: 1px; fill: none; stroke: #000; stroke-width: 2.2; stroke-linecap: round; }

/* Sidebar */
.shell { flex: 1; min-height: 0; display: flex; }
.sidebar {
  flex: none;
  width: 220px;
  display: flex;
  flex-direction: column;
  gap: 10px;
  padding: 16px 11px 7px;
  background: #f8f9fb;
  border-right: 1px solid #c4c6c9;
}
.sidebar hr { width: 100%; height: 1px; margin: 0; border: 0; background: #939597; flex: none; }
.item {
  flex: none;
  height: 43px;
  display: flex;
  align-items: center;
  gap: 18px;
  padding-left: 11px;
  border-radius: 8px;
  color: #3b3b3d;
  font-size: 18.200px;
  font-weight: 300;
}
.item span { padding-bottom: 1px; }
.item svg { width: 26px; height: 26px; fill: none; stroke: currentColor; stroke-width: 1.700; }
.item .solid { fill: currentColor; stroke: none; }
.item.active { background: #ececec; color: #000; }
.spacer { flex: 1; }

/* Main column */
.main { position: relative; flex: 1; min-width: 0; overflow: hidden; }
.hero {
  height: 308px;
  display: flex;
  align-items: center;
  justify-content: space-between;
  padding: 0 160px 0 173px;
  background: linear-gradient(90deg, #8598b7, #444c6d);
  color: #fff;
}
.hero-logo { width: 154px; height: 154px; margin-top: 2px; fill: #fcfcfc; }
.hero h1 { padding-bottom: 12px; font-size: 44px; line-height: 52px; font-weight: 600; text-align: center; }
.heading {
  height: 131px;
  display: flex;
  align-items: flex-start;
  justify-content: space-between;
  padding: 38px 150px 0;
}
.heading h2 { font-size: 32px; line-height: 46px; font-weight: 600; }
.manage {
  width: 162px;
  height: 38px;
  margin-top: 5px;
  display: flex;
  align-items: center;
  padding: 0 13px 0 15px;
  border: 0;
  border-radius: 5px;
  background: #0d6efd;
  color: #fff;
  font: 600 16px Ubuntu, "Noto Sans", sans-serif;
}
.manage svg { width: 18px; height: 18px; margin-right: 8px; fill: #fff; }
.manage span { width: 96px; text-align: left; white-space: nowrap; }
.caret { margin-left: auto; border: 4px solid transparent; border-top-color: #fff; border-bottom: 0; }
.content { display: flex; justify-content: space-between; align-items: flex-start; padding: 0 151px 0 150px; }

/* Map */
.map {
  width: 1004px;
  height: 573px;
  margin-top: -1px;
  overflow: hidden;
  border: 1px solid #d4d6d6;
  border-bottom: 0;
  border-radius: 16px 16px 0 0;
  background: #aad3df;
}
.map svg { width: 1002px; height: 571px; }
.land { fill: #f2efe7; }
.plain { fill: #f3f5df; }
.wood { fill: #cce2bc; }
.moor { fill: #dde2a8; }
.speck { fill: #dfecd3; }
.lake { fill: #aad3df; }
.region, .border, .sea { fill: none; stroke-linejoin: round; }
.region { stroke: #a78dab; stroke-width: 3; opacity: .8; }
.border { stroke: #a48ba9; stroke-width: 6; opacity: .85; }
.sea { stroke: #9a86ab; stroke-width: 4.500; opacity: .85; }
.dots circle { fill: #fff; stroke: #555; stroke-width: 2.200; }
.capitals circle { fill: #333; stroke: #fff; stroke-width: 4; outline: 2px solid #444; outline-offset: 0; border-radius: 50%; }
.map text { text-anchor: middle; paint-order: stroke; stroke: rgba(255, 255, 255, .6); stroke-width: 6px; stroke-linejoin: round; font-family: "Noto Sans", sans-serif; }
.city text { font-size: 35px; fill: #1c1c1c; }
.state text { font-size: 31px; font-style: italic; fill: #85578a; }
.country text { font-size: 38px; fill: #663b70; }
.map .island { font-size: 34px; font-style: italic; fill: #111; }
.marker { fill: rgba(51, 136, 255, .5); stroke: #0d6efd; stroke-width: 8; }

/* Card */
.card {
  width: 298px;
  height: 700px;
  padding: 15px;
  border-radius: 11px;
  background: #fff;
  box-shadow: 0 0 40px rgba(0, 0, 0, .11);
}
.card-image {
  position: relative;
  height: 250px;
  display: flex;
  align-items: center;
  justify-content: center;
  border-radius: 8px;
  box-shadow: 0 0 12px rgba(0, 0, 0, .16);
}
.card-logo { width: 99px; height: 99px; }
.pencil { position: absolute; top: 15px; right: 16px; width: 20px; height: 20px; }
.card-text { height: 179px; padding: 21px 8px 0; }
.card-text h3 { font-size: 19.800px; line-height: 28px; font-weight: 600; }
.card-text p { margin-top: 4px; font-size: 16.300px; line-height: 26px; font-weight: 300; color: #6c757d; white-space: nowrap; }
.stats { display: grid; grid-template-columns: 123px 121px; column-gap: 22px; row-gap: 12px; padding-left: 1px; }
.stat {
  height: 59px;
  display: flex;
  align-items: flex-start;
  gap: 8px;
  padding: 8px 0 0 5px;
  border-radius: 7px;
  box-shadow: 0 0 8px rgba(0, 0, 0, .14);
}
.badge { width: 42px; height: 42px; display: flex; align-items: center; justify-content: center; border-radius: 10px; background: #e6f0ff; flex: none; }
.badge svg { width: 20px; height: 20px; fill: #458fff; overflow: visible; }
.badge .clip { width: 24px; height: 24px; fill: none; stroke: #458fff; stroke-width: 2; stroke-linecap: round; }
.num { display: flex; flex-direction: column; margin-top: -4px; }
.num b { font-size: 19.500px; line-height: 26px; font-weight: 600; }
.num span { font-size: 14.300px; line-height: 26px; font-weight: 300; color: #6c757d; }
.grip { position: absolute; right: 0; bottom: 0; width: 14px; height: 14px; fill: none; stroke: #858585; stroke-width: 1.100; }
```
